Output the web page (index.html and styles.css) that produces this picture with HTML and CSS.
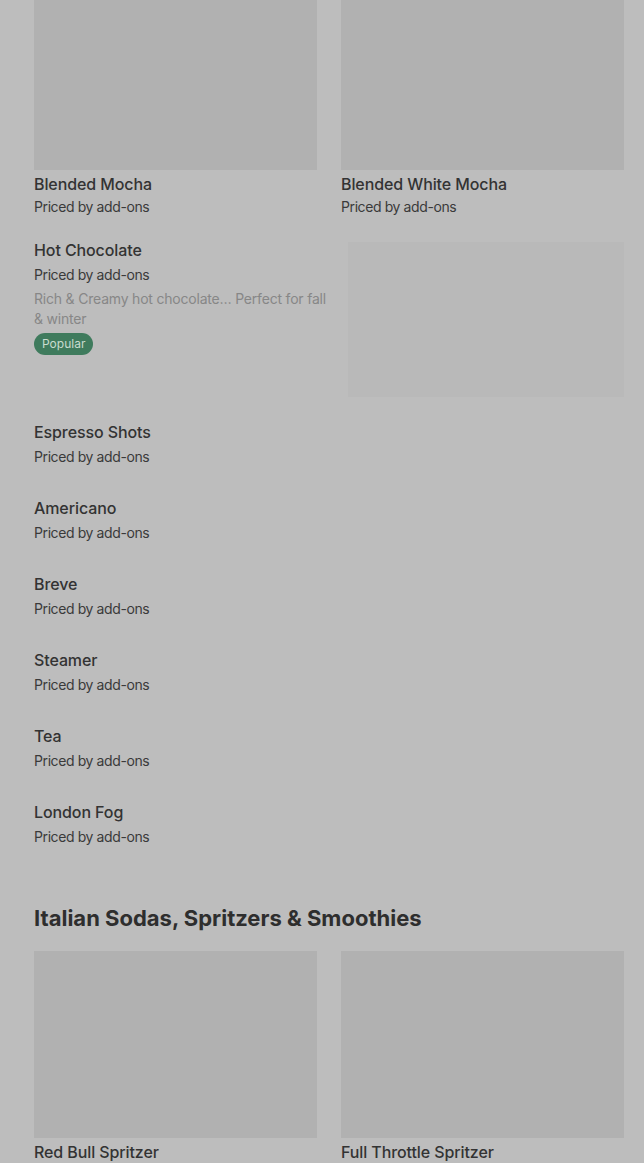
FILE: index.html
```html
<!DOCTYPE html>
<html lang="en">
<head>
<meta charset="utf-8">
<title>Menu</title>
<link rel="stylesheet" href="styles.css">
</head>
<body>
<main class="menu">
  <div class="grid grid-top">
    <div class="card">
      <div class="ph"></div>
      <div class="title">Blended Mocha</div>
      <div class="price">Priced by add-ons</div>
    </div>
    <div class="card">
      <div class="ph"></div>
      <div class="title">Blended White Mocha</div>
      <div class="price">Priced by add-ons</div>
    </div>
  </div>

  <div class="feature">
    <div class="feature-text">
      <div class="title">Hot Chocolate</div>
      <div class="price">Priced by add-ons</div>
      <div class="desc">Rich &amp; Creamy hot chocolate… Perfect for fall &amp; winter</div>
      <span class="badge">Popular</span>
    </div>
    <div class="feature-img"></div>
  </div>

  <div class="item"><div class="title">Espresso Shots</div><div class="price">Priced by add-ons</div></div>
  <div class="item"><div class="title">Americano</div><div class="price">Priced by add-ons</div></div>
  <div class="item"><div class="title">Breve</div><div class="price">Priced by add-ons</div></div>
  <div class="item"><div class="title">Steamer</div><div class="price">Priced by add-ons</div></div>
  <div class="item"><div class="title">Tea</div><div class="price">Priced by add-ons</div></div>
  <div class="item"><div class="title">London Fog</div><div class="price">Priced by add-ons</div></div>

  <h2 class="section">Italian Sodas, Spritzers &amp; Smoothies</h2>

  <div class="grid">
    <div class="card">
      <div class="ph"></div>
      <div class="title">Red Bull Spritzer</div>
    </div>
    <div class="card">
      <div class="ph"></div>
      <div class="title">Full Throttle Spritzer</div>
    </div>
  </div>
</main>
</body>
</html>
```
FILE: styles.css
```css
html, body {
  margin: 0;
  padding: 0;
  background: #bdbdbd;
}
body {
  font-family: Inter, Roboto, "Liberation Sans", Arial, sans-serif;
  color: #2e2e2e;
  overflow: hidden;
}
.menu {
  padding: 0 20px 0 34px;
}
.grid {
  display: grid;
  grid-template-columns: 1fr 1fr;
  column-gap: 24px;
}
.grid-top {
  margin-top: -17px;
}
.ph {
  height: 187px;
  background: #b1b1b1;
}
.card .title {
  margin-top: 3px;
}
.title {
  font-size: 16px;
  line-height: 22px;
  font-weight: 500;
  letter-spacing: -0.1px;
  color: #333333;
}
.price {
  font-size: 14px;
  line-height: 20px;
  margin-top: 2px;
  letter-spacing: -0.4px;
  color: #3a3a3a;
}
.feature {
  display: flex;
  gap: 20px;
  margin-top: 22px;
  margin-bottom: 24px;
}
.feature-text {
  flex: 1;
  min-width: 0;
}
.feature .price {
  margin-top: 4px;
}
.desc {
  font-size: 14px;
  line-height: 20px;
  letter-spacing: -0.2px;
  color: #878787;
  margin-top: 4px;
}
.badge {
  display: inline-block;
  margin-top: 4px;
  height: 22px;
  line-height: 22px;
  padding: 0 8px;
  border-radius: 11px;
  background: #3f7b5d;
  color: #c9dccf;
  font-size: 12px;
}
.feature-img {
  width: 276px;
  height: 155px;
  margin-top: 3px;
  background: #b9b9b9;
}
.item {
  padding-bottom: 30px;
}
.item .price {
  margin-top: 4px;
}
.section {
  margin: 27px 0 19px;
  font-family: Inter, "Noto Sans", sans-serif;
  font-size: 22px;
  line-height: 28px;
  font-weight: 700;
  letter-spacing: 0px;
  color: #2e2e2e;
}
```
